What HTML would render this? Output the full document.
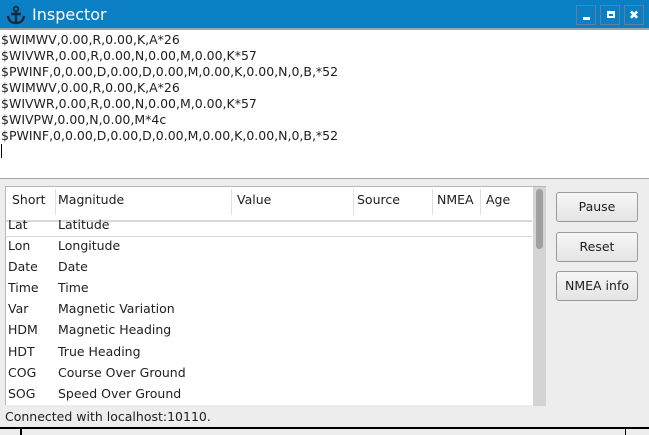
<!DOCTYPE html>
<html><head><style>
*{margin:0;padding:0;box-sizing:border-box}
body{width:649px;height:435px;background:#ededed;font-family:"DejaVu Sans","Liberation Sans",sans-serif;font-size:13px;color:#202020;position:relative;overflow:hidden}
.title{position:absolute;left:0;top:0;width:649px;height:30px;background:#0b7fc3;border-bottom:2px solid #9aa6ad}
.title span{position:absolute;left:32px;top:5px;color:#fff;font-size:16px}
.wb{position:absolute;top:5px;width:20px;height:20px;border:1px solid #6a7c9a;color:#fff}
.txt{position:absolute;left:0;top:30px;width:649px;height:149px;background:#fff;border-bottom:1px solid #a8a8a8;padding:2px 1px;line-height:16px;font-size:12.5px;white-space:pre}
.tbl{position:absolute;left:5px;top:186px;width:541px;height:219px;background:#fff;border:1px solid #b8b8b8;border-bottom:none}
.hd{position:absolute;top:5px;font-size:12.5px}
.sep{position:absolute;top:2px;width:1px;height:26px;background:#e0e0e0}
.row{position:absolute;left:2px;font-size:12.5px}
.row b{font-weight:normal;position:absolute;left:50px;white-space:nowrap}
.sb{position:absolute;left:527px;top:0;width:13px;height:219px;background:#d4d4d4}
.sb div{position:absolute;left:3px;top:2px;width:7px;height:60px;background:#a0a0a0;border-radius:4px}
.btn{position:absolute;left:556px;width:82px;height:30px;border:1px solid #9a9a9a;border-radius:3px;background:linear-gradient(#f6f6f6,#e4e4e4);text-align:center;line-height:28px;font-size:12.5px}
.st{position:absolute;left:5px;top:409px;font-size:12.5px}
</style></head><body>
<div class="title">
<svg style="position:absolute;left:6px;top:5px" width="20" height="20" viewBox="0 0 20 20"><circle cx="10" cy="4" r="2.3" fill="none" stroke="#1a2a3a" stroke-width="1.8"/><path d="M10 6v12M5 9h10M2 11q1 7 8 7q7 0 8-7" fill="none" stroke="#1a2a3a" stroke-width="2.4"/></svg>
<span>Inspector</span>
<div class="wb" style="left:576px"><div style="position:absolute;left:6px;top:11px;width:7px;height:3px;background:#fff"></div></div>
<div class="wb" style="left:600px"><div style="position:absolute;left:6px;top:5px;width:8px;height:7px;border:2px solid #fff;border-top-width:3px"></div></div>
<div class="wb" style="left:624px;font-size:12px;font-weight:bold;text-align:center;line-height:18px">✖</div>
</div>
<div class="txt">$WIMWV,0.00,R,0.00,K,A*26
$WIVWR,0.00,R,0.00,N,0.00,M,0.00,K*57
$PWINF,0,0.00,D,0.00,D,0.00,M,0.00,K,0.00,N,0,B,*52
$WIMWV,0.00,R,0.00,K,A*26
$WIVWR,0.00,R,0.00,N,0.00,M,0.00,K*57
$WIVPW,0.00,N,0.00,M*4c
$PWINF,0,0.00,D,0.00,D,0.00,M,0.00,K,0.00,N,0,B,*52
<span style="display:inline-block;width:1px;height:14px;background:#000"></span></div>
<div class="tbl">
<div class="hd" style="left:6px">Short</div><div class="sep" style="left:49px"></div>
<div class="hd" style="left:52px">Magnitude</div><div class="sep" style="left:225px"></div>
<div class="hd" style="left:231px">Value</div><div class="sep" style="left:347px"></div>
<div class="hd" style="left:351px">Source</div><div class="sep" style="left:426px"></div>
<div class="hd" style="left:431px">NMEA</div><div class="sep" style="left:474px"></div>
<div class="hd" style="left:480px">Age</div>
<div style="position:absolute;left:0;top:33px;width:526px;height:2px;background:#d8d8d8"></div>
<div class="row" style="top:30px">Lat<b>Latitude</b></div>
<div style="position:absolute;left:0;top:49px;width:526px;height:1px;background:#d8d8d8"></div>
<div class="row" style="top:51px">Lon<b>Longitude</b></div>
<div class="row" style="top:72px">Date<b>Date</b></div>
<div class="row" style="top:93px">Time<b>Time</b></div>
<div class="row" style="top:114px">Var<b>Magnetic Variation</b></div>
<div class="row" style="top:135px">HDM<b>Magnetic Heading</b></div>
<div class="row" style="top:157px">HDT<b>True Heading</b></div>
<div class="row" style="top:178px">COG<b>Course Over Ground</b></div>
<div class="row" style="top:199px">SOG<b>Speed Over Ground</b></div>
<div class="sb"><div></div></div>
</div>
<div class="btn" style="top:192px">Pause</div>
<div class="btn" style="top:232px">Reset</div>
<div class="btn" style="top:271px">NMEA info</div>
<div class="st">Connected with localhost:10110.</div>
<div style="position:absolute;left:0;top:427px;width:649px;height:8px;border-top:2px solid #000;background:#ededed"></div>
<div style="position:absolute;left:20px;top:427px;width:2px;height:8px;background:#000"></div>
<div style="position:absolute;left:625px;top:427px;width:1px;height:8px;background:#000"></div>
</body></html>
